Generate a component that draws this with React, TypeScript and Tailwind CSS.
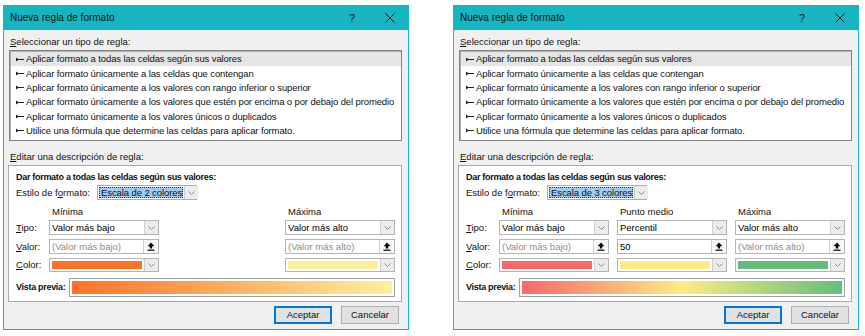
import React from "react";

const RULES = [
  "Aplicar formato a todas las celdas según sus valores",
  "Aplicar formato únicamente a las celdas que contengan",
  "Aplicar formato únicamente a los valores con rango inferior o superior",
  "Aplicar formato únicamente a los valores que estén por encima o por debajo del promedio",
  "Aplicar formato únicamente a los valores únicos o duplicados",
  "Utilice una fórmula que determine las celdas para aplicar formato.",
];

function Chevron() {
  return (
    <svg width="7" height="4" viewBox="0 0 7 4">
      <path d="M0.5 0.5L3.5 3.5L6.5 0.5" fill="none" stroke="#8a8a8a" strokeWidth="1" />
    </svg>
  );
}

function UploadIcon() {
  return (
    <svg width="8" height="9" viewBox="0 0 8 9">
      <path d="M4 0.5L0.6 4.2H2.8V6.6H5.2V4.2H7.4Z" fill="#000" />
      <rect x="0.5" y="7.6" width="7" height="1.2" fill="#000" />
    </svg>
  );
}

function RuleArrow() {
  return (
    <svg width="8" height="5" viewBox="0 0 8 5" className="shrink-0">
      <path d="M0 0.5L3 2.5L0 4.5Z" fill="#222" />
      <rect x="1" y="2" width="7" height="1" fill="#222" />
    </svg>
  );
}

function DropBtn() {
  return (
    <div className="w-[14px] h-full border-l border-[#cfcfcf] bg-[#ececec] flex items-center justify-center shrink-0">
      <Chevron />
    </div>
  );
}

function Combo({ text }: { text: string }) {
  return (
    <div className="w-[110px] h-full border border-[#b4b4b4] bg-white flex">
      <div className="flex-1 pl-[2px] flex items-center text-black">{text}</div>
      <DropBtn />
    </div>
  );
}

function ValueBox({ text, muted }: { text: string; muted?: boolean }) {
  return (
    <div className="w-[110px] h-full border border-[#b4b4b4] bg-white flex">
      <div className={`flex-1 pl-[2px] flex items-center ${muted ? "text-[#8c8c8c]" : "text-black"}`}>{text}</div>
      <div className="w-[15px] h-full border-l border-[#cfcfcf] bg-[#fafafa] flex items-center justify-center shrink-0">
        <UploadIcon />
      </div>
    </div>
  );
}

function ColorBox({ color }: { color: string }) {
  return (
    <div className="w-[110px] h-full border border-[#b4b4b4] bg-white flex">
      <div className="flex-1 p-[2px]">
        <div className="w-full h-full" style={{ background: color }} />
      </div>
      <DropBtn />
    </div>
  );
}

type Col = { head: string; tipo: string; valor: string; muted: boolean; color: string } | null;

function Dialog({ three }: { three: boolean }) {
  const cols: Col[] = three
    ? [
        { head: "Mínima", tipo: "Valor más bajo", valor: "(Valor más bajo)", muted: true, color: "#f8696b" },
        { head: "Punto medio", tipo: "Percentil", valor: "50", muted: false, color: "#ffeb84" },
        { head: "Máxima", tipo: "Valor más alto", valor: "(Valor más alto)", muted: true, color: "#63be7b" },
      ]
    : [
        { head: "Mínima", tipo: "Valor más bajo", valor: "(Valor más bajo)", muted: true, color: "#ff7128" },
        null,
        { head: "Máxima", tipo: "Valor más alto", valor: "(Valor más alto)", muted: true, color: "#ffef9c" },
      ];
  const gradient = three
    ? "linear-gradient(to right, #f8696b, #ffeb84 50%, #63be7b)"
    : "linear-gradient(to right, #ff7128, #ffef9c)";

  return (
    <div className="w-[406px] h-[325px] border border-[#17b4c1] bg-[#f0f0f0] flex flex-col shrink-0">
      {/* title bar */}
      <div className="h-[24px] bg-[#17b4c1] flex items-center pl-[6px] pr-[13px] shrink-0 text-[10px]">
        <span>Nueva regla de formato</span>
        <span className="ml-auto w-[10px] text-center text-[11px] mr-[28px]">?</span>
        <svg width="10" height="10" viewBox="0 0 10 10">
          <path d="M0.5 0.5L9.5 9.5M9.5 0.5L0.5 9.5" stroke="#111" strokeWidth="1" />
        </svg>
      </div>

      <div className="pl-[4px] pr-[6px] flex flex-col">
        <div className="mt-[5px] h-[14px] leading-[14px] pl-[2px]">
          <span className="underline">S</span>eleccionar un tipo de regla:
        </div>

        {/* rule type list */}
        <div className="mt-[1px] ml-[1px] h-[91px] border border-[#828282] shadow-[inset_1px_1px_0_#b0b0b0] bg-white pt-[1px] pl-[1px]">
          {RULES.map((r, i) => (
            <div
              key={i}
              className={`h-[14.3px] flex items-center pl-[5px] gap-[2px] whitespace-nowrap tracking-[-0.12px] ${i === 0 ? "bg-[#e5e5e5]" : ""}`}
            >
              <RuleArrow />
              <span>{r}</span>
            </div>
          ))}
        </div>

        <div className="mt-[9px] h-[14px] leading-[14px] pl-[2px]">
          <span className="underline">E</span>ditar una descripción de regla:
        </div>

        {/* description panel */}
        <div className="mt-[1px] h-[137px] border border-[#a9a9a9] bg-white pl-[7px] pt-[4px] flex flex-col">
          <div className="h-[14px] leading-[14px] font-bold text-[9px] tracking-[-0.3px]">
            Dar formato a todas las celdas según sus valores:
          </div>
          <div className="mt-[1px] h-[15px] flex items-center">
            <div className="w-[81px]">
              Estilo de f<span className="underline">o</span>rmato:
            </div>
            <div className="w-[100px] h-full border border-[#adadad] bg-white flex">
              <div className="flex-1 p-[1px]">
                <div className="w-full h-full bg-[#9fcbf2] border border-dotted border-[#333] flex items-center pl-[1px] whitespace-nowrap overflow-hidden tracking-[-0.1px]">
                  Escala de {three ? "3" : "2"} colores
                </div>
              </div>
              <DropBtn />
            </div>
          </div>

          {/* column headers */}
          <div className="mt-[5px] h-[14px] flex items-center">
            <div className="w-[33px]" />
            {cols.map((c, i) => (
              <div key={i} className={`w-[110px] pl-[3px] ${i > 0 ? "ml-[8px]" : ""}`}>
                {c ? c.head : ""}
              </div>
            ))}
          </div>

          <div className="mt-[1px] h-[15px] flex items-center">
            <div className="w-[33px]">
              <span className="underline">T</span>ipo:
            </div>
            {cols.map((c, i) => (
              <div key={i} className={`w-[110px] h-full ${i > 0 ? "ml-[8px]" : ""}`}>
                {c && <Combo text={c.tipo} />}
              </div>
            ))}
          </div>

          <div className="mt-[4px] h-[15px] flex items-center">
            <div className="w-[33px]">
              <span className="underline">V</span>alor:
            </div>
            {cols.map((c, i) => (
              <div key={i} className={`w-[110px] h-full ${i > 0 ? "ml-[8px]" : ""}`}>
                {c && <ValueBox text={c.valor} muted={c.muted} />}
              </div>
            ))}
          </div>

          <div className="mt-[4px] h-[14px] flex items-center">
            <div className="w-[33px]">
              <span className="underline">C</span>olor:
            </div>
            {cols.map((c, i) => (
              <div key={i} className={`w-[110px] h-full ${i > 0 ? "ml-[8px]" : ""}`}>
                {c && <ColorBox color={c.color} />}
              </div>
            ))}
          </div>

          <div className="mt-[6px] h-[19px] flex items-center">
            <div className="w-[53px] font-bold text-[9px] tracking-[-0.3px]">Vista previa:</div>
            <div className="w-[326px] h-full border border-[#a0a0a0] bg-white p-[2px]">
              <div className="w-full h-full" style={{ background: gradient }} />
            </div>
          </div>
        </div>

        {/* buttons */}
        <div className="mt-[4px] h-[18px] flex justify-end pr-[3px] gap-[9px]">
          <div className="w-[58px] h-full border-2 border-[#0078d7] bg-[#e1e1e1] flex items-center justify-center">
            Aceptar
          </div>
          <div className="w-[58px] h-full border border-[#adadad] bg-[#e1e1e1] flex items-center justify-center">
            Cancelar
          </div>
        </div>
      </div>
    </div>
  );
}

export default function App() {
  return (
    <div className="w-[865px] h-[336px] bg-white flex pl-[3px] pt-[5px] gap-[44px] text-[9.5px] text-[#111] font-['Liberation_Sans',Arial,sans-serif] leading-none">
      <Dialog three={false} />
      <Dialog three={true} />
    </div>
  );
}
